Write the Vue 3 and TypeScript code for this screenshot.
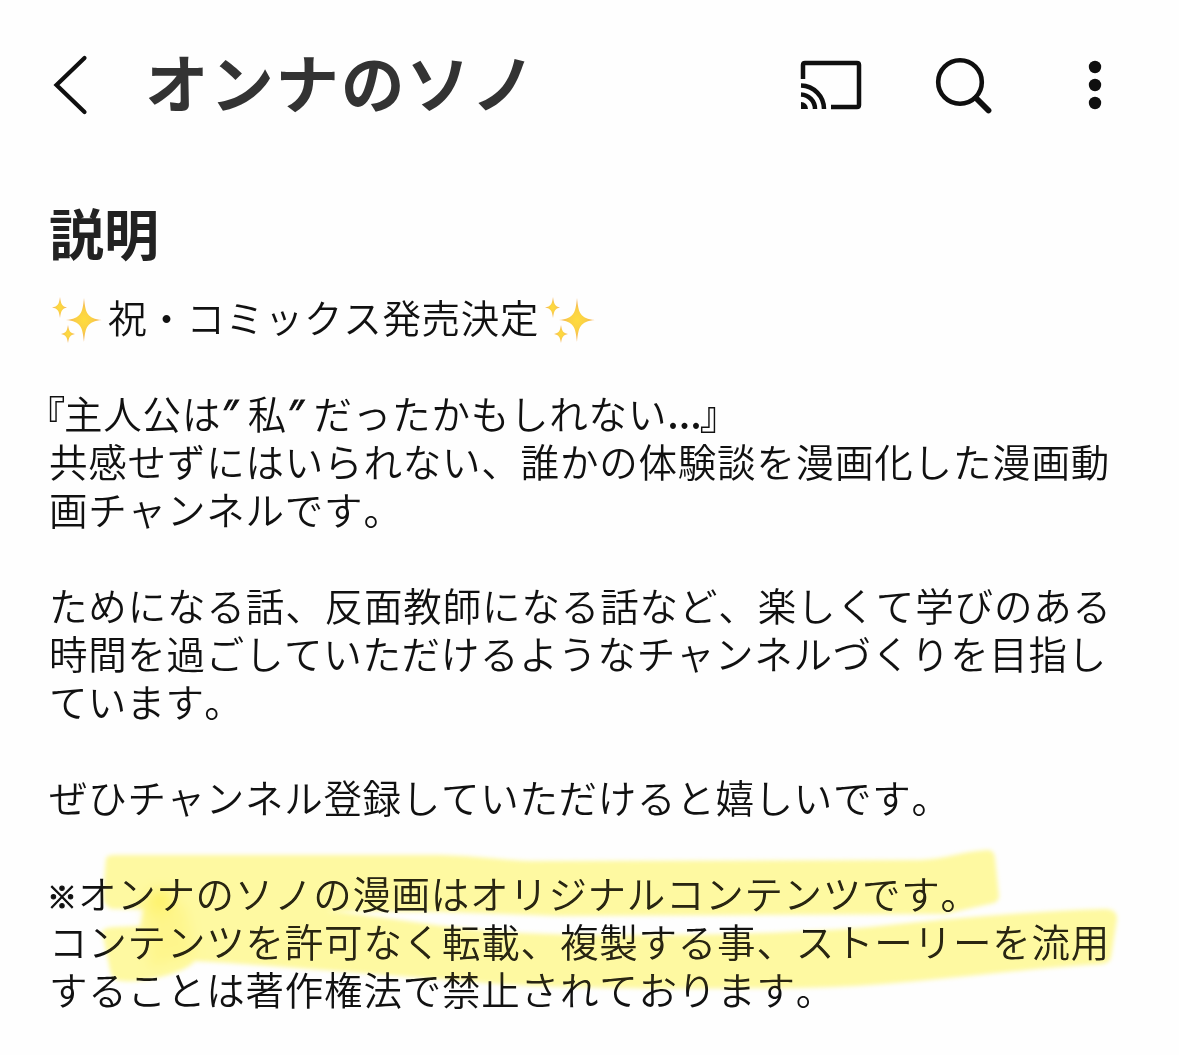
<script setup lang="ts">
interface Line { text: string; spacing?: number }

const lines: Line[] = [
  { text: '共感せずにはいられない、誰かの体験談を漫画化した漫画動' },
  { text: '画チャンネルです。' },
  { text: '' },
  { text: 'ためになる話、反面教師になる話など、楽しくて学びのある', spacing: 0.87 },
  { text: '時間を過ごしていただけるようなチャンネルづくりを目指し', spacing: 0.68 },
  { text: 'ています。', spacing: 0.3 },
  { text: '' },
  { text: 'ぜひチャンネル登録していただけると嬉しいです。', spacing: 0.7 },
  { text: '' },
]
const sparkles = [
  'M34 2 C35.500 17 37 22.500 52 24 C37 25.500 35.500 31 34 46 C32.500 31 31 25.500 16 24 C31 22.500 32.500 17 34 2Z',
  'M10 1 C11 8 12 10.500 17 11.500 C12 12.500 11 15 10 22 C9 15 8 12.500 2 11.500 C8 10.500 9 8 10 1Z',
  'M18 29 C19 35 20 37 25 38 C20 39 19 41 18 47 C17 41 16 39 11 38 C16 37 17 35 18 29Z',
]
const upper = 'M106 858 Q108 855 114 855 L440 855 C480 856 500 860 530 861 L920 860 C945 859 965 851 988 850 Q994 850 995 858 L999 896 Q999 901 994 903 L945 914 L560 916 L440 912 L112 909 Q103 906 103 895 Z'
const lower = 'M102 931 Q106 927 116 927 L140 926 C145 910 143 890 153 888 Q160 886 168 903 L300 909 C380 914 430 928 520 933 C640 938 790 934 870 927 C950 919 1030 911 1105 909 Q1117 909 1117 919 L1111 957 Q1110 963 1102 964 C1010 969 900 987 800 988 C640 989 540 989 450 980 C370 974 280 966 195 961 Q188 969 168 975 Q140 983 121 981 Q112 981 110 970 Z'
</script>

<template>
  <main class="screen">
    <header class="bar">
      <svg class="back" width="40" height="66" viewBox="0 0 40 66"><path d="M33.500 6 L5.500 33 L33.500 60" /></svg>
      <h1>オンナのソノ</h1>
      <svg class="cast" width="62" height="50" viewBox="0 0 62 50">
        <path d="M3 19 V5 Q3 3 5 3 H57 Q59 3 59 5 V45 Q59 47 57 47 H31" />
        <path d="M1 25.500 A23.500 23.500 0 0 1 24 49 M1 34.500 A14.500 14.500 0 0 1 15 49" />
        <path class="solid" d="M1 42 A7 7 0 0 1 8 49 H1Z" />
      </svg>
      <svg class="search" width="60" height="60" viewBox="0 0 60 60"><circle cx="26" cy="27" r="21.800" /><path d="M42 43 L54.500 55.500" /></svg>
      <svg class="more" width="14" height="50" viewBox="0 0 14 50"><circle cx="7" cy="7" r="6.200" /><circle cx="7" cy="25" r="6.200" /><circle cx="7" cy="43" r="6.200" /></svg>
    </header>

    <section class="about">
      <h2>説明</h2>
      <p class="line lead">
        <svg v-for="n in 2" :key="n" class="sparkles" :class="{ last: n === 2 }" width="54" height="49" viewBox="0 0 54 49">
          <defs>
            <radialGradient :id="'gold' + n"><stop offset="0" stop-color="#ffdc3c" /><stop offset=".45" stop-color="#fad046" /><stop offset="1" stop-color="#f3ab58" /></radialGradient>
          </defs>
          <path v-for="d in sparkles" :key="d" :d="d" :fill="`url(#gold${n})`" />
        </svg>
        <span class="notice">祝・コミックス発売決定</span>
      </p>
      <p class="line"></p>
      <p class="line"><span class="open">『</span><span>主人公は</span><span class="mark">″</span><span>私</span><span class="mark">″</span><span>だったかもしれない</span><span class="dots">...</span><span class="close">』</span></p>
      <p v-for="(line, i) in lines" :key="i" class="line" :style="{ letterSpacing: (line.spacing ?? 0.8) + 'px' }">{{ line.text }}</p>
      <p class="line note"><span class="kome">※</span>オンナのソノの漫画はオリジナルコンテンツです。</p>
      <p class="line">コンテンツを許可なく転載、複製する事、ストーリーを流用</p>
      <p class="line">することは著作権法で禁止されております。</p>
    </section>

    <svg class="marker" width="1179" height="1055" viewBox="0 0 1179 1055">
      <path :d="upper" /><path :d="lower" />
      <ellipse class="dense" cx="160" cy="903" rx="13" ry="13" />
      <path class="dense soft" d="M145 905 H185 L195 955 L150 968 Z" />
    </svg>
    <svg class="marker ink" width="1179" height="1055" viewBox="0 0 1179 1055"><path :d="upper" /><path :d="lower" /></svg>
  </main>
</template>

<style>
body { margin: 0; background: #fefefe; }
</style>

<style scoped>
.screen { position: relative; width: 1179px; height: 1055px; overflow: hidden; background: #fefefe; color: #111; font-family: "Noto Sans CJK JP", sans-serif; font-kerning: none; }
.bar { display: flex; align-items: center; height: 170px; box-sizing: border-box; padding-left: 51px; }
svg { display: block; flex: none; fill: none; stroke: #0f0f0f; }
.back { stroke-width: 4.2; stroke-linecap: round; stroke-linejoin: miter; }
h1 { flex: none; width: 655px; margin: 0 0 11px 54px; font-size: 63.5px; letter-spacing: 1.8px; line-height: 80px; font-weight: 700; color: #333; white-space: nowrap; }
.cast { stroke-width: 4.5; }
.solid { fill: #0f0f0f; stroke: none; }
.search { margin-left: 72px; stroke-width: 4.6; stroke-linecap: round; }
.search path { stroke-width: 5.8; }
.more { margin-left: 94px; fill: #0f0f0f; stroke: none; }
.about { padding-left: 49px; }
h2 { margin: 0 0 22px; padding-top: 21px; height: 100px; box-sizing: border-box; font-size: 55px; line-height: 80px; font-weight: 700; color: #222; }
.line { display: flex; align-items: center; height: 48px; margin: 0; font-size: 38.5px; line-height: 48px; letter-spacing: .8px; font-weight: 350; white-space: nowrap; }
.lead { letter-spacing: .7px; }
.note { letter-spacing: .7px; }
.notice { order: 1; margin-left: 4px; }
.sparkles { stroke: none; margin: 9px 0 0 1px; }
.last { order: 2; margin-left: 4px; }
.open { width: 17px; margin-right: -2px; display: flex; justify-content: flex-end; font-weight: 500; }
.mark { width: 26.500px; font-family: "Noto Sans", sans-serif; font-style: italic; font-weight: 400; -webkit-text-stroke: .8px #111; }
.dots { letter-spacing: 0; font-weight: 500; }
.close { width: 39px; margin-left: -2px; font-weight: 500; }
.kome { width: 31px; padding-top: 5px; font-size: 30px; font-weight: 900; margin-left: -2px; -webkit-text-stroke: 1px #111; }
.marker { position: absolute; left: 0; top: 0; fill: #fffaa2; stroke: none; mix-blend-mode: multiply; filter: blur(2px); pointer-events: none; }
.dense { fill: #fff36a; filter: blur(6px); }
.soft { fill: #fff580; opacity: .6; }
.ink { fill: #2a2610; mix-blend-mode: lighten; }
</style>
